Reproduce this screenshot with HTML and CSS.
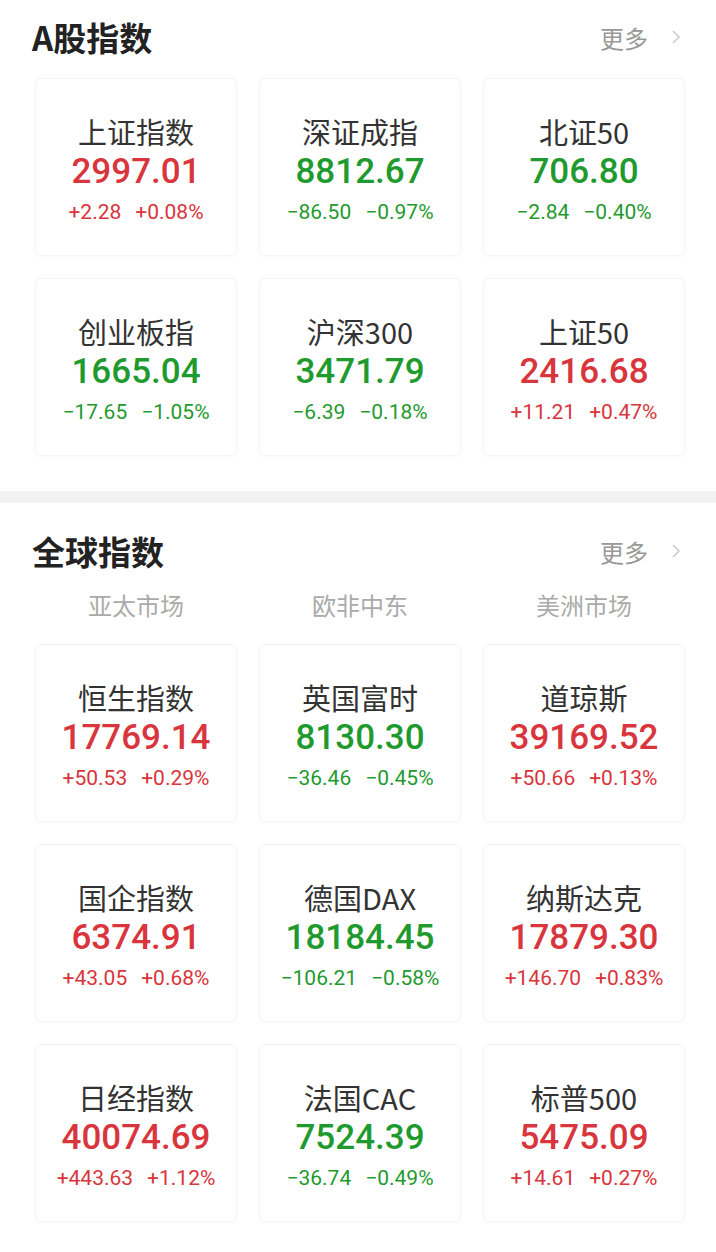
FILE: index.html
```html
<!DOCTYPE html>
<html>
<head>
    <meta charset="utf-8">
    <title>指数</title>
    <link rel="stylesheet" href="styles.css">
</head>
<body>
    <section class="section section-a">
        <div class="section-header">
            <h2>A股指数</h2>
            <a class="more">更多
                <svg width="12" height="16" viewBox="0 0 12 16"><polyline points="3,2 9,8 3,14" fill="none" stroke="#cccccc" stroke-width="1.6"/></svg>
            </a>
        </div>
        <div class="grid">
            <div class="card up">
                <div class="name">上证指数</div>
                <div class="value">2997.01</div>
                <div class="change"><span>+2.28</span><span>+0.08%</span></div>
            </div>
            <div class="card down">
                <div class="name">深证成指</div>
                <div class="value">8812.67</div>
                <div class="change"><span>−86.50</span><span>−0.97%</span></div>
            </div>
            <div class="card down">
                <div class="name">北证50</div>
                <div class="value">706.80</div>
                <div class="change"><span>−2.84</span><span>−0.40%</span></div>
            </div>
            <div class="card down">
                <div class="name">创业板指</div>
                <div class="value">1665.04</div>
                <div class="change"><span>−17.65</span><span>−1.05%</span></div>
            </div>
            <div class="card down">
                <div class="name">沪深300</div>
                <div class="value">3471.79</div>
                <div class="change"><span>−6.39</span><span>−0.18%</span></div>
            </div>
            <div class="card up">
                <div class="name">上证50</div>
                <div class="value">2416.68</div>
                <div class="change"><span>+11.21</span><span>+0.47%</span></div>
            </div>
        </div>
    </section>

    <div class="divider"></div>

    <section class="section section-global">
        <div class="section-header">
            <h2>全球指数</h2>
            <a class="more">更多
                <svg width="12" height="16" viewBox="0 0 12 16"><polyline points="3,2 9,8 3,14" fill="none" stroke="#cccccc" stroke-width="1.6"/></svg>
            </a>
        </div>
        <div class="grid tabs">
            <div class="tab">亚太市场</div>
            <div class="tab">欧非中东</div>
            <div class="tab">美洲市场</div>
        </div>
        <div class="grid">
            <div class="card up">
                <div class="name">恒生指数</div>
                <div class="value">17769.14</div>
                <div class="change"><span>+50.53</span><span>+0.29%</span></div>
            </div>
            <div class="card down">
                <div class="name">英国富时</div>
                <div class="value">8130.30</div>
                <div class="change"><span>−36.46</span><span>−0.45%</span></div>
            </div>
            <div class="card up">
                <div class="name">道琼斯</div>
                <div class="value">39169.52</div>
                <div class="change"><span>+50.66</span><span>+0.13%</span></div>
            </div>
            <div class="card up">
                <div class="name">国企指数</div>
                <div class="value">6374.91</div>
                <div class="change"><span>+43.05</span><span>+0.68%</span></div>
            </div>
            <div class="card down">
                <div class="name">德国DAX</div>
                <div class="value">18184.45</div>
                <div class="change"><span>−106.21</span><span>−0.58%</span></div>
            </div>
            <div class="card up">
                <div class="name">纳斯达克</div>
                <div class="value">17879.30</div>
                <div class="change"><span>+146.70</span><span>+0.83%</span></div>
            </div>
            <div class="card up">
                <div class="name">日经指数</div>
                <div class="value">40074.69</div>
                <div class="change"><span>+443.63</span><span>+1.12%</span></div>
            </div>
            <div class="card down">
                <div class="name">法国CAC</div>
                <div class="value">7524.39</div>
                <div class="change"><span>−36.74</span><span>−0.49%</span></div>
            </div>
            <div class="card up">
                <div class="name">标普500</div>
                <div class="value">5475.09</div>
                <div class="change"><span>+14.61</span><span>+0.27%</span></div>
            </div>
        </div>
    </section>
</body>
</html>
```

FILE: styles.css
```css
body {
    margin: 0;
    background: white;
    font-family: "Noto Sans CJK SC", "Noto Sans", sans-serif;
    color: #333;
}

.section {
    padding: 14px 31px 35px 35px;
}

.section-global {
    padding-top: 25px;
    padding-bottom: 31px;
}

.section-header {
    display: flex;
    align-items: center;
    justify-content: space-between;
    height: 46px;
    margin-bottom: 18px;
}

.section-header h2 {
    margin: 0 0 0 -3px;
    font-size: 33px;
    font-weight: bold;
    color: #222;
    line-height: 46px;
}

.more {
    display: flex;
    align-items: center;
    gap: 22px;
    font-size: 24px;
    color: #999;
    padding-right: 3px;
}

.grid {
    display: grid;
    grid-template-columns: repeat(3, 1fr);
    gap: 22px;
}

.tabs {
    margin-top: -5px;
    margin-bottom: 21px;
}

.tab {
    text-align: center;
    font-size: 24px;
    line-height: 36px;
    color: #aaa;
}

.card {
    height: 178px;
    box-sizing: border-box;
    padding-top: 32px;
    text-align: center;
    background: white;
    border: 1px solid #f5f5f5;
    border-radius: 6px;
    box-shadow: 0 1px 5px rgba(0,0,0,0.025);
}

.name {
    font-size: 29px;
    line-height: 40px;
    color: #333;
}

.value {
    font-family: Roboto, "Liberation Sans", sans-serif;
    font-size: 35px;
    font-weight: 500;
    line-height: 42px;
}

.change {
    display: flex;
    justify-content: center;
    gap: 14px;
    font-family: Roboto, "Liberation Sans", sans-serif;
    font-size: 21px;
    line-height: 38px;
}

.up .value,
.up .change {
    color: #d8353d;
}

.down .value,
.down .change {
    color: #1f9a2e;
}

.divider {
    height: 12px;
    background: #f2f2f2;
}
```
